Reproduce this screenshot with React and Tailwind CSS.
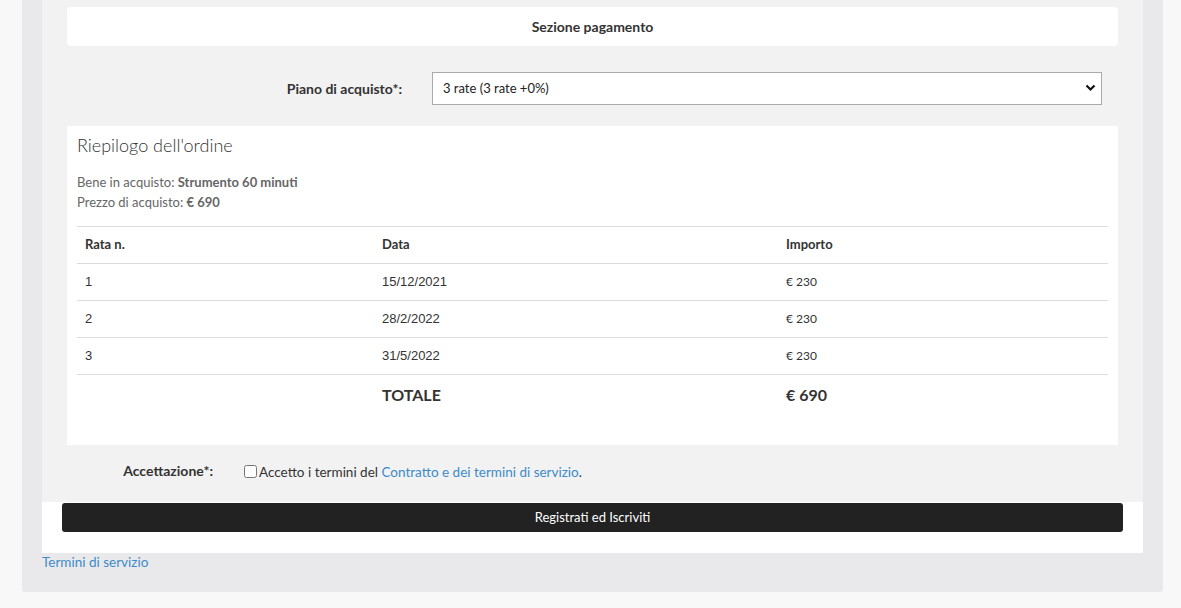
import React from "react";

const rate = [
  { n: "1", data: "15/12/2021", importo: "€ 230" },
  { n: "2", data: "28/2/2022", importo: "€ 230" },
  { n: "3", data: "31/5/2022", importo: "€ 230" },
];

export default function App() {
  return (
    <div
      className="min-h-[608px] bg-[#f8f8f8] pl-[22px] pr-[18px] pb-4 text-[#333]"
      style={{ fontFamily: "Lato, 'Open Sans', sans-serif" }}
    >
      <div className="rounded-b-[3px] bg-[#e9e9eb] px-5 pb-[21px]">
        {/* form panel */}
        <div className="bg-[#f2f2f2] px-[25px] pt-[7px] pb-[20px]">
          <div className="flex h-[39px] items-center justify-center rounded bg-white text-[14px] font-bold">
            Sezione pagamento
          </div>

          <div className="mt-[26px] flex items-center">
            <label className="w-[335px] text-right text-[14px] font-bold">Piano di acquisto*:</label>
            <div className="relative ml-[30px] w-[670px]">
              <select className="h-[33px] w-full appearance-none border border-[#aaa] bg-white pl-[10px] text-[13px] text-[#222] outline-none">
                <option>3 rate (3 rate +0%)</option>
              </select>
              <svg
                className="pointer-events-none absolute right-[6px] top-[12px]"
                width="11"
                height="8"
                viewBox="0 0 11 8"
              >
                <path d="M1.5 1.5 L5.5 5.5 L9.5 1.5" fill="none" stroke="#111" strokeWidth="2.2" />
              </svg>
            </div>
          </div>

          {/* riepilogo */}
          <div className="mt-[21px] bg-white px-[10px] pt-[8px] pb-[30px]">
            <h3 className="text-[18px] font-light leading-[22px] text-[#333]">Riepilogo dell'ordine</h3>
            <div className="mt-[16px] text-[13px] leading-[20px] text-[#666]">
              <div>
                Bene in acquisto: <b className="font-bold">Strumento 60 minuti</b>
              </div>
              <div>
                Prezzo di acquisto: <b className="font-bold">€ 690</b>
              </div>
            </div>

            <table className="mt-[14px] w-full border-collapse text-[13px]">
              <thead>
                <tr className="h-[37px] border-t border-[#ddd] text-left">
                  <th className="w-[297px] px-2 font-bold">Rata n.</th>
                  <th className="w-[404px] px-2 font-bold">Data</th>
                  <th className="px-2 font-bold">Importo</th>
                </tr>
              </thead>
              <tbody>
                {rate.map((r) => (
                  <tr key={r.n} className="h-[37px] border-t border-[#ddd]">
                    <td className="px-2" style={{ fontFamily: "'Liberation Sans', Arial, sans-serif" }}>
                      {r.n}
                    </td>
                    <td className="px-2" style={{ fontFamily: "'Liberation Sans', Arial, sans-serif" }}>
                      {r.data}
                    </td>
                    <td className="px-2 text-[12px]">{r.importo}</td>
                  </tr>
                ))}
                <tr className="h-[40px] border-t border-[#ddd] text-[16px] font-bold">
                  <td className="px-2"></td>
                  <td className="px-2">TOTALE</td>
                  <td className="px-2">€ 690</td>
                </tr>
              </tbody>
            </table>
          </div>

          <div className="mt-[14px] flex items-center">
            <label className="w-[146px] text-right text-[14px] font-bold">Accettazione*:</label>
            <div className="ml-[31px] flex items-center pt-[3px] text-[13.5px]">
              <input type="checkbox" className="m-0 h-[13px] w-[13px] rounded-[2px]" />
              <span className="ml-[2px]">
                Accetto i termini del{" "}
                <a href="#" className="text-[#3d8bc9]">
                  Contratto e dei termini di servizio
                </a>
                .
              </span>
            </div>
          </div>
        </div>

        {/* submit */}
        <div className="bg-white px-5 pt-[1px] pb-[21px]">
          <button className="h-[29px] w-full rounded-[3px] bg-[#222] text-[13px] text-white">
            Registrati ed Iscriviti
          </button>
        </div>

        <a href="#" className="block text-[13.5px] leading-[18px] text-[#3d8bc9]">
          Termini di servizio
        </a>
      </div>
    </div>
  );
}
